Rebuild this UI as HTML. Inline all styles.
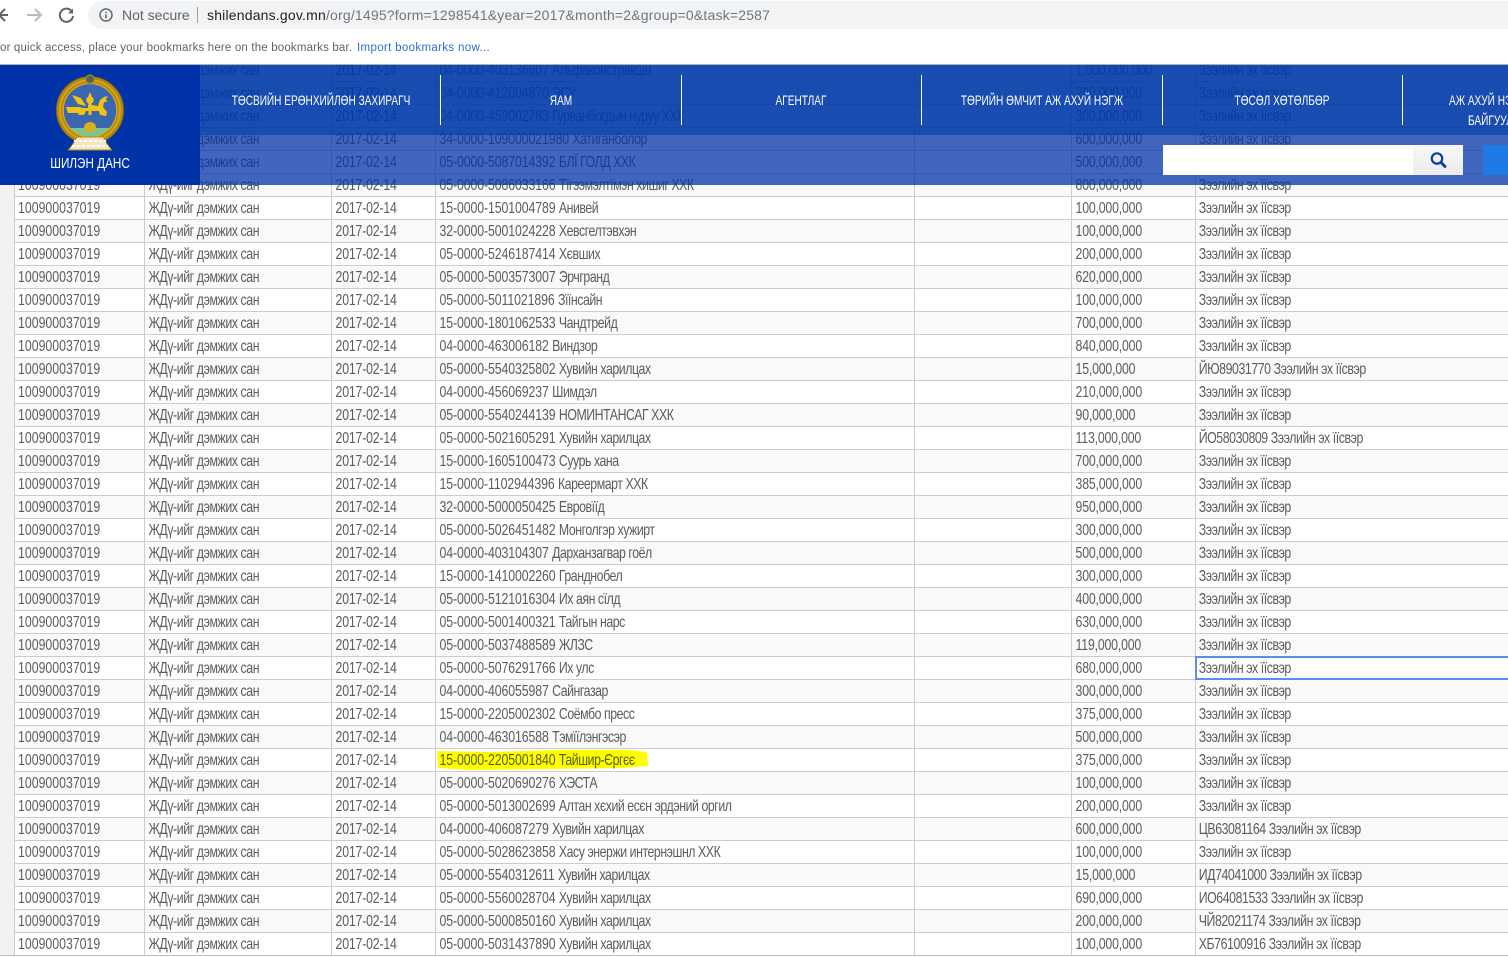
<!DOCTYPE html>
<html lang="mn">
<head>
<meta charset="utf-8">
<title>Шилэн данс</title>
<style>
html,body{margin:0;padding:0;background:#fff;}
body{position:relative;width:1508px;height:957px;overflow:hidden;font-family:"Liberation Sans",sans-serif;}
#tw{position:absolute;left:0;top:58px;transform:scaleX(.77);transform-origin:0 0;width:1959px;}
table{border-collapse:separate;border-spacing:0;table-layout:fixed;width:1959px;font-size:16px;color:#5c5c5c;}
td{height:20px;line-height:20px;padding:2px 0 0;border-top:1px solid #ccc;white-space:nowrap;overflow:hidden;background:#fff;}
tr:nth-child(even) td{background:#f9f9f9;}
td:nth-child(3),td:nth-child(7){letter-spacing:-.55px;}
td:nth-child(4),td:nth-child(6){letter-spacing:-.24px;}
td:nth-child(5){letter-spacing:-.13px;}
td i{font-style:normal;letter-spacing:-.58px;}
.v{position:absolute;top:58px;height:897px;width:1px;background:#ccc;}
#strip{position:absolute;left:0;top:58px;width:14px;height:897px;background:#f2f2f2;}
#bot{position:absolute;left:0;top:955px;width:1508px;height:1px;background:#bbb;}
#bot2{position:absolute;left:0;top:956px;width:1508px;height:1px;background:#fff;}
#sel{position:absolute;left:1195px;top:656px;width:313px;height:24px;box-sizing:border-box;border:2px solid #5a8fe6;border-right:0;}
#mark{position:absolute;left:430px;top:745px;mix-blend-mode:multiply;}
#ov1{position:absolute;left:0;top:65px;width:1508px;height:120px;background:rgba(0,51,167,.75);}
#ov2{position:absolute;left:0;top:65px;width:1508px;height:70px;background:rgba(0,60,170,.6);}
#logo{position:absolute;left:0;top:65px;width:200px;height:120px;background:#0033a7;}
.n{position:absolute;color:#fff;font-size:14px;line-height:20px;white-space:nowrap;transform-origin:50% 50%;}
.d{position:absolute;top:75px;width:1px;height:50px;background:#fff;}
#chrome{position:absolute;left:0;top:0;width:1508px;height:64px;background:#fff;border-bottom:1px solid #b0b0b0;}
#pill{position:absolute;left:88px;top:1px;width:1440px;height:28px;border-radius:14px;background:#f1f3f4;}
.c{position:absolute;white-space:nowrap;font-size:14px;line-height:16px;}
</style>
</head>
<body>
<div id="tw"><table>
<colgroup><col style="width:23.4px"><col style="width:169.4px"><col style="width:243px"><col style="width:135px"><col style="width:826px"><col style="width:160px"><col></colgroup>
<tr><td></td><td>100900037019</td><td>ЖДү-ийг дэмжих сан</td><td>2017-02-14</td><td>04-0000-403136607 <i>Альфаконстракшн</i></td><td>1,000,000,000</td><td>Зээлийн эх їїсвэр</td></tr>
<tr><td></td><td>100900037019</td><td>ЖДү-ийг дэмжих сан</td><td>2017-02-14</td><td>04-0000-412004870 <i>ЭСУ</i></td><td>200,000,000</td><td>Зээлийн эх їїсвэр</td></tr>
<tr><td></td><td>100900037019</td><td>ЖДү-ийг дэмжих сан</td><td>2017-02-14</td><td>04-0000-459002783 <i>Гурванбогдын нуруу ХХК</i></td><td>300,000,000</td><td>Зээлийн эх їїсвэр</td></tr>
<tr><td></td><td>100900037019</td><td>ЖДү-ийг дэмжих сан</td><td>2017-02-14</td><td>34-0000-109000021980 <i>Хатиганболор</i></td><td>600,000,000</td><td>Зээлийн эх їїсвэр</td></tr>
<tr><td></td><td>100900037019</td><td>ЖДү-ийг дэмжих сан</td><td>2017-02-14</td><td>05-0000-5087014392 <i>БЛЇ ГОЛД ХХК</i></td><td>500,000,000</td><td>Зээлийн эх їїсвэр</td></tr>
<tr><td></td><td>100900037019</td><td>ЖДү-ийг дэмжих сан</td><td>2017-02-14</td><td>05-0000-5086033166 <i>Тїгээмэлтїмэн хишиг ХХК</i></td><td>800,000,000</td><td>Зээлийн эх їїсвэр</td></tr>
<tr><td></td><td>100900037019</td><td>ЖДү-ийг дэмжих сан</td><td>2017-02-14</td><td>15-0000-1501004789 <i>Анивей</i></td><td>100,000,000</td><td>Зээлийн эх їїсвэр</td></tr>
<tr><td></td><td>100900037019</td><td>ЖДү-ийг дэмжих сан</td><td>2017-02-14</td><td>32-0000-5001024228 <i>Хевсгелтэвхэн</i></td><td>100,000,000</td><td>Зээлийн эх їїсвэр</td></tr>
<tr><td></td><td>100900037019</td><td>ЖДү-ийг дэмжих сан</td><td>2017-02-14</td><td>05-0000-5246187414 <i>Хєвших</i></td><td>200,000,000</td><td>Зээлийн эх їїсвэр</td></tr>
<tr><td></td><td>100900037019</td><td>ЖДү-ийг дэмжих сан</td><td>2017-02-14</td><td>05-0000-5003573007 <i>Эрчгранд</i></td><td>620,000,000</td><td>Зээлийн эх їїсвэр</td></tr>
<tr><td></td><td>100900037019</td><td>ЖДү-ийг дэмжих сан</td><td>2017-02-14</td><td>05-0000-5011021896 <i>Зїїнсайн</i></td><td>100,000,000</td><td>Зээлийн эх їїсвэр</td></tr>
<tr><td></td><td>100900037019</td><td>ЖДү-ийг дэмжих сан</td><td>2017-02-14</td><td>15-0000-1801062533 <i>Чандтрейд</i></td><td>700,000,000</td><td>Зээлийн эх їїсвэр</td></tr>
<tr><td></td><td>100900037019</td><td>ЖДү-ийг дэмжих сан</td><td>2017-02-14</td><td>04-0000-463006182 <i>Виндзор</i></td><td>840,000,000</td><td>Зээлийн эх їїсвэр</td></tr>
<tr><td></td><td>100900037019</td><td>ЖДү-ийг дэмжих сан</td><td>2017-02-14</td><td>05-0000-5540325802 <i>Хувийн харилцах</i></td><td>15,000,000</td><td>ЙЮ89031770 Зээлийн эх їїсвэр</td></tr>
<tr><td></td><td>100900037019</td><td>ЖДү-ийг дэмжих сан</td><td>2017-02-14</td><td>04-0000-456069237 <i>Шимдэл</i></td><td>210,000,000</td><td>Зээлийн эх їїсвэр</td></tr>
<tr><td></td><td>100900037019</td><td>ЖДү-ийг дэмжих сан</td><td>2017-02-14</td><td>05-0000-5540244139 <i>НОМИНТАНСАГ ХХК</i></td><td>90,000,000</td><td>Зээлийн эх їїсвэр</td></tr>
<tr><td></td><td>100900037019</td><td>ЖДү-ийг дэмжих сан</td><td>2017-02-14</td><td>05-0000-5021605291 <i>Хувийн харилцах</i></td><td>113,000,000</td><td>ЙО58030809 Зээлийн эх їїсвэр</td></tr>
<tr><td></td><td>100900037019</td><td>ЖДү-ийг дэмжих сан</td><td>2017-02-14</td><td>15-0000-1605100473 <i>Суурь хана</i></td><td>700,000,000</td><td>Зээлийн эх їїсвэр</td></tr>
<tr><td></td><td>100900037019</td><td>ЖДү-ийг дэмжих сан</td><td>2017-02-14</td><td>15-0000-1102944396 <i>Карееpмарт ХХК</i></td><td>385,000,000</td><td>Зээлийн эх їїсвэр</td></tr>
<tr><td></td><td>100900037019</td><td>ЖДү-ийг дэмжих сан</td><td>2017-02-14</td><td>32-0000-5000050425 <i>Евровїїд</i></td><td>950,000,000</td><td>Зээлийн эх їїсвэр</td></tr>
<tr><td></td><td>100900037019</td><td>ЖДү-ийг дэмжих сан</td><td>2017-02-14</td><td>05-0000-5026451482 <i>Монголгэр хужирт</i></td><td>300,000,000</td><td>Зээлийн эх їїсвэр</td></tr>
<tr><td></td><td>100900037019</td><td>ЖДү-ийг дэмжих сан</td><td>2017-02-14</td><td>04-0000-403104307 <i>Дарханзагвар гоёл</i></td><td>500,000,000</td><td>Зээлийн эх їїсвэр</td></tr>
<tr><td></td><td>100900037019</td><td>ЖДү-ийг дэмжих сан</td><td>2017-02-14</td><td>15-0000-1410002260 <i>Грандно­бел</i></td><td>300,000,000</td><td>Зээлийн эх їїсвэр</td></tr>
<tr><td></td><td>100900037019</td><td>ЖДү-ийг дэмжих сан</td><td>2017-02-14</td><td>05-0000-5121016304 <i>Их аян сїлд</i></td><td>400,000,000</td><td>Зээлийн эх їїсвэр</td></tr>
<tr><td></td><td>100900037019</td><td>ЖДү-ийг дэмжих сан</td><td>2017-02-14</td><td>05-0000-5001400321 <i>Тайгын нарс</i></td><td>630,000,000</td><td>Зээлийн эх їїсвэр</td></tr>
<tr><td></td><td>100900037019</td><td>ЖДү-ийг дэмжих сан</td><td>2017-02-14</td><td>05-0000-5037488589 <i>ЖЛЗС</i></td><td>119,000,000</td><td>Зээлийн эх їїсвэр</td></tr>
<tr><td></td><td>100900037019</td><td>ЖДү-ийг дэмжих сан</td><td>2017-02-14</td><td>05-0000-5076291766 <i>Их улс</i></td><td>680,000,000</td><td>Зээлийн эх їїсвэр</td></tr>
<tr><td></td><td>100900037019</td><td>ЖДү-ийг дэмжих сан</td><td>2017-02-14</td><td>04-0000-406055987 <i>Сайнгазар</i></td><td>300,000,000</td><td>Зээлийн эх їїсвэр</td></tr>
<tr><td></td><td>100900037019</td><td>ЖДү-ийг дэмжих сан</td><td>2017-02-14</td><td>15-0000-2205002302 <i>Соёмбо пресс</i></td><td>375,000,000</td><td>Зээлийн эх їїсвэр</td></tr>
<tr><td></td><td>100900037019</td><td>ЖДү-ийг дэмжих сан</td><td>2017-02-14</td><td>04-0000-463016588 <i>Тэмїїлэнгэсэр</i></td><td>500,000,000</td><td>Зээлийн эх їїсвэр</td></tr>
<tr><td></td><td>100900037019</td><td>ЖДү-ийг дэмжих сан</td><td>2017-02-14</td><td>15-0000-2205001840 <i>Тайшир-Єргєє</i></td><td>375,000,000</td><td>Зээлийн эх їїсвэр</td></tr>
<tr><td></td><td>100900037019</td><td>ЖДү-ийг дэмжих сан</td><td>2017-02-14</td><td>05-0000-5020690276 <i>ХЭСТА</i></td><td>100,000,000</td><td>Зээлийн эх їїсвэр</td></tr>
<tr><td></td><td>100900037019</td><td>ЖДү-ийг дэмжих сан</td><td>2017-02-14</td><td>05-0000-5013002699 <i>Алтан хєхий есєн эрдэний оргил</i></td><td>200,000,000</td><td>Зээлийн эх їїсвэр</td></tr>
<tr><td></td><td>100900037019</td><td>ЖДү-ийг дэмжих сан</td><td>2017-02-14</td><td>04-0000-406087279 <i>Хувийн харилцах</i></td><td>600,000,000</td><td>ЦВ63081164 Зээлийн эх їїсвэр</td></tr>
<tr><td></td><td>100900037019</td><td>ЖДү-ийг дэмжих сан</td><td>2017-02-14</td><td>05-0000-5028623858 <i>Хасу энержи интернэшнл ХХК</i></td><td>100,000,000</td><td>Зээлийн эх їїсвэр</td></tr>
<tr><td></td><td>100900037019</td><td>ЖДү-ийг дэмжих сан</td><td>2017-02-14</td><td>05-0000-5540312611 <i>Хувийн харилцах</i></td><td>15,000,000</td><td>ИД74041000 Зээлийн эх їїсвэр</td></tr>
<tr><td></td><td>100900037019</td><td>ЖДү-ийг дэмжих сан</td><td>2017-02-14</td><td>05-0000-5560028704 <i>Хувийн харилцах</i></td><td>690,000,000</td><td>ИО64081533 Зээлийн эх їїсвэр</td></tr>
<tr><td></td><td>100900037019</td><td>ЖДү-ийг дэмжих сан</td><td>2017-02-14</td><td>05-0000-5000850160 <i>Хувийн харилцах</i></td><td>200,000,000</td><td>ЧЙ82021174 Зээлийн эх їїсвэр</td></tr>
<tr><td></td><td>100900037019</td><td>ЖДү-ийг дэмжих сан</td><td>2017-02-14</td><td>05-0000-5031437890 <i>Хувийн харилцах</i></td><td>100,000,000</td><td>ХБ76100916 Зээлийн эх їїсвэр</td></tr>
</table></div>

<div id="strip"></div>
<div class="v" style="left:14px"></div>
<div class="v" style="left:144px"></div>
<div class="v" style="left:331px"></div>
<div class="v" style="left:435px"></div>
<div class="v" style="left:914px"></div>
<div class="v" style="left:1071px"></div>
<div class="v" style="left:1195px"></div>
<div id="bot"></div><div id="bot2"></div>
<div id="sel"></div>

<svg id="mark" width="230" height="30" viewBox="0 0 230 30"><path d="M8 7 L60 8 L130 6 L200 6 L216 8 L217 20 L190 22 L120 23 L40 24 L9 22 Z" fill="#ffff00" stroke="#ffff00" stroke-width="2" stroke-linejoin="round"/></svg>

<div id="ov1"></div>
<div id="ov2"></div>

<div class="d" style="left:440px"></div>
<div class="d" style="left:681px"></div>
<div class="d" style="left:921px"></div>
<div class="d" style="left:1162px"></div>
<div class="d" style="left:1402px"></div>
<div class="n" style="left:321px;top:90px;transform:translateX(-50%) scaleX(.72)">ТӨСВИЙН ЕРӨНХИЙЛӨН ЗАХИРАГЧ</div>
<div class="n" style="left:561px;top:90px;transform:translateX(-50%) scaleX(.72)">ЯАМ</div>
<div class="n" style="left:801px;top:90px;transform:translateX(-50%) scaleX(.72)">АГЕНТЛАГ</div>
<div class="n" style="left:1042px;top:90px;transform:translateX(-50%) scaleX(.72)">ТӨРИЙН ӨМЧИТ АЖ АХУЙ НЭГЖ</div>
<div class="n" style="left:1282px;top:90px;transform:translateX(-50%) scaleX(.72)">ТӨСӨЛ ХӨТӨЛБӨР</div>
<div class="n" style="left:1449px;top:90px;transform:scaleX(.72);transform-origin:0 50%">АЖ АХУЙ НЭГЖ</div>
<div class="n" style="left:1468px;top:110px;transform:scaleX(.72);transform-origin:0 50%">БАЙГУУЛЛАГА</div>

<div style="position:absolute;left:1163px;top:145px;width:250px;height:30px;background:#fff"></div>
<div style="position:absolute;left:1413px;top:145px;width:50px;height:30px;background:linear-gradient(#f8f8f8,#ececec)"></div>
<svg style="position:absolute;left:1429px;top:151px" width="18" height="18" viewBox="0 0 18 18"><circle cx="8" cy="7.5" r="5.2" fill="none" stroke="#0a3ea3" stroke-width="2.2"/><path d="M11.8 11.3 L16 15.5" stroke="#0a3ea3" stroke-width="2.8" stroke-linecap="round"/></svg>
<div style="position:absolute;left:1483px;top:145px;width:25px;height:30px;background:#1e7be6"></div>

<div id="logo">
<svg width="200" height="120" viewBox="0 0 200 120" style="position:absolute;left:0;top:0">
<defs><clipPath id="ic"><circle cx="90" cy="45.3" r="26.7"/></clipPath></defs>
<circle cx="90" cy="45.3" r="33.6" fill="#b98a12" stroke="#7f6418" stroke-width="1"/>
<circle cx="90" cy="45.3" r="30" fill="none" stroke="#d9a916" stroke-width="1.5"/>
<circle cx="90" cy="45.3" r="26.7" fill="#3b66b0"/>
<rect x="60" y="63" width="60" height="12" fill="#7cc490" clip-path="url(#ic)"/>
<circle cx="90" cy="45.3" r="26.7" fill="none" stroke="#e0b020" stroke-width="1"/>
<circle cx="90" cy="14.3" r="4.2" fill="#4c6256" stroke="#a8851f" stroke-width="1.4"/>
<path d="M72 30 L81 33 L86 41 L78 39 Z" fill="#f2c40f"/>
<circle cx="90" cy="35" r="3.8" fill="#f2c40f"/>
<path d="M90 27 L92 32 H88 Z M88.5 38 H91.5 V50 H88.5 Z" fill="#f2c40f"/>
<path d="M66 42 H80 L82 43 H88 V40 H92 L98 41 L100 35 L104 32 L108 31 L106 34 L107 37 L104 37 L103 42 L107 47 L106 51 L100 50 L99 46 H86 L84 50 H78 L79 48 H68 L67 45 Z" fill="#f2c40f"/>
<ellipse cx="90" cy="62" rx="6" ry="5" fill="#dcae1c"/>
<path d="M68.3 85 L73 79 L76.7 72 H103.3 L107 79 L111.7 85 Z" fill="#f4e7c0" stroke="#b98a12" stroke-width="1"/>
<path d="M74 76 H106 M72 81 H108" stroke="#fff" stroke-width="2" stroke-dasharray="3 2"/>
</svg>
<div class="n" style="left:90px;top:89px;font-size:15px;transform:translateX(-50%) scaleX(.78)">ШИЛЭН ДАНС</div>
</div>

<div id="chrome">
<div id="pill"></div>
<svg style="position:absolute;left:0;top:6px" width="90" height="18" viewBox="0 0 90 18">
<path d="M8 9 H0 M5 3 L-1 9 L5 15" fill="none" stroke="#5f6368" stroke-width="2"/>
<path d="M27 9 H41 M35 3 L41 9 L35 15" fill="none" stroke="#b8babd" stroke-width="2"/>
<path d="M71.5 5 A6.6 6.6 0 1 0 73 10" fill="none" stroke="#5f6368" stroke-width="2"/>
<path d="M73 2.5 V7.5 H68 Z" fill="#5f6368"/>
</svg>
<svg style="position:absolute;left:99px;top:8px" width="14" height="14" viewBox="0 0 14 14"><circle cx="7" cy="7" r="6" fill="none" stroke="#5f6368" stroke-width="1.4"/><path d="M7 6.2 V10.4 M7 3.6 V5" stroke="#5f6368" stroke-width="1.5"/></svg>
<div class="c" style="left:122px;top:7px;color:#5f6368">Not secure</div>
<div style="position:absolute;left:197px;top:7px;width:1px;height:16px;background:#9aa0a6"></div>
<div class="c" style="left:207px;top:7px;color:#70757a;letter-spacing:.19px"><span style="color:#202124">shilendans.gov.mn</span>/org/1495?form=1298541&amp;year=2017&amp;month=2&amp;group=0&amp;task=2587</div>
<div class="c" style="left:0;top:40px;font-size:11.5px;color:#5f6368;letter-spacing:.17px">or quick access, place your bookmarks here on the bookmarks bar.</div>
<div class="c" style="left:357px;top:40px;font-size:11.5px;color:#2a6fd6;letter-spacing:.34px">Import bookmarks now...</div>
</div>
</body>
</html>
